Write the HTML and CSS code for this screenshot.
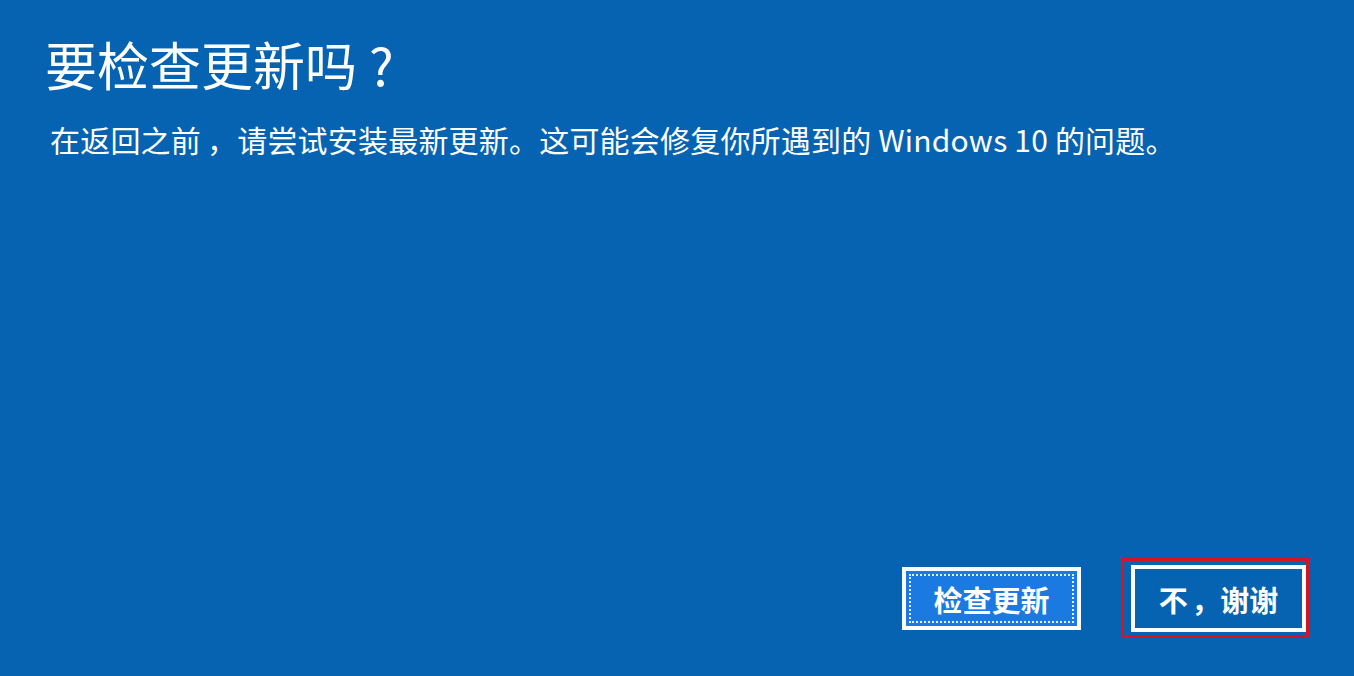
FILE: index.html
```html
<!DOCTYPE html>
<html lang="zh-CN">
<head>
<meta charset="utf-8">
<title>要检查更新吗?</title>
<link rel="stylesheet" href="styles.css">
</head>
<body>
<main class="screen">
  <h1 class="title">要检查更新吗<span class="qmark">?</span></h1>
  <p class="subtitle">在返回之前<span class="comma">，</span>请尝试安装最新更新。这可能会修复你所遇到的 Windows 10 的问题。</p>
  <div class="actions">
    <button class="btn btn-primary"><span class="focus-ring">检查更新</span></button>
    <div class="highlight-wrap">
      <button class="btn btn-secondary">不<span class="comma">，</span>谢谢</button>
      <span class="highlight"></span>
    </div>
  </div>
</main>
</body>
</html>
```
FILE: styles.css
```css
html, body {
  margin: 0;
  padding: 0;
  height: 100%;
  background: #0563b2;
}
.screen {
  box-sizing: border-box;
  height: 100vh;
  display: flex;
  flex-direction: column;
  padding: 33px 48px 44px 45px;
  color: #ffffff;
  font-family: "Noto Sans CJK SC", "Noto Sans", sans-serif;
}
.title {
  margin: 0;
  font-size: 52px;
  font-weight: 400;
  line-height: 62px;
}
.qmark {
  margin-left: 12px;
}
.subtitle {
  margin: 23px 0 0 5px;
  font-size: 30px;
  font-weight: 400;
  line-height: 42px;
  letter-spacing: 0.2px;
}
.comma {
  margin-left: 0.2em;
}
.actions {
  margin-top: auto;
  display: flex;
  justify-content: flex-end;
  align-items: center;
  gap: 50px;
}
.btn {
  font-family: "Noto Sans CJK SC", "Noto Sans", sans-serif;
  font-weight: 700;
  font-size: 29px;
  color: #ffffff;
  border: 4px solid #ffffff;
  padding: 0;
  margin: 0;
  box-sizing: border-box;
  display: flex;
  align-items: center;
  justify-content: center;
}
.btn-primary {
  width: 179px;
  height: 63px;
  background: #1a7ae2;
  padding: 3px;
}
.focus-ring {
  flex: 1;
  align-self: stretch;
  display: flex;
  align-items: center;
  justify-content: center;
  border: 2px dotted #dfeeff;
}
.btn-secondary {
  width: 175px;
  height: 67px;
  background: #0563b2;
}
.btn-secondary .comma {
  margin-left: 0.12em;
}
.highlight-wrap {
  position: relative;
}
.highlight {
  position: absolute;
  left: -10px;
  top: -7px;
  right: -3px;
  bottom: -6px;
  border: 3px solid #d4141e;
  box-sizing: border-box;
  pointer-events: none;
}
```
